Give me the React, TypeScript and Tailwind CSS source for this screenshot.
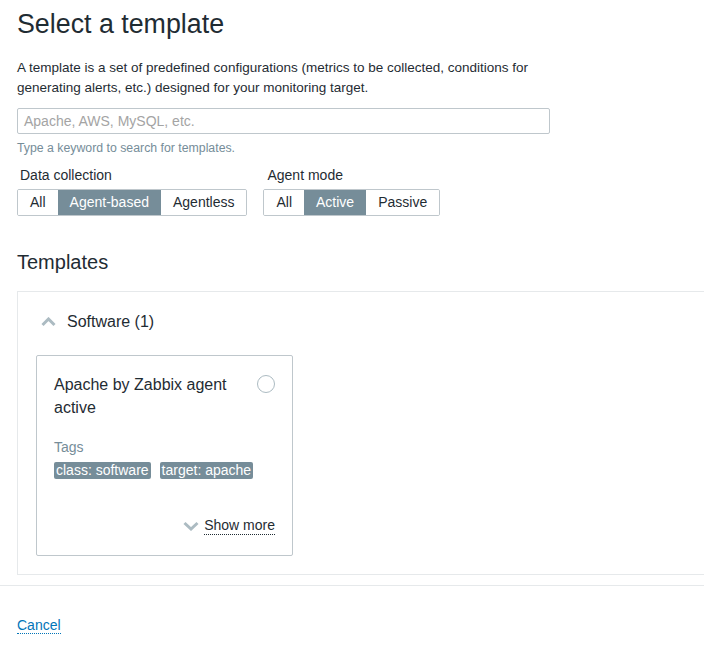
import React from "react";

function Segmented({ items, active }: { items: string[]; active: number }) {
  return (
    <div className="flex h-[27px] border border-[#bfc7cc] rounded-[2px] overflow-hidden">
      {items.map((it, i) => (
        <div
          key={it}
          className={
            i === active
              ? "px-3 flex items-center bg-[#768d99] text-white text-[14px]"
              : "px-3 flex items-center bg-white text-[#1f2c33] text-[14px]"
          }
        >
          {it}
        </div>
      ))}
    </div>
  );
}

export default function App() {
  return (
    <div className="font-['Liberation_Sans',Arial,sans-serif] text-[#1f2c33] bg-white w-[704px] h-[661px] overflow-hidden">
      <div className="px-[17px]">
        <h1 className="text-[26.8px] leading-[30px] pt-[9px] font-normal">Select a template</h1>
        <p className="mt-[19px] text-[13.5px] leading-[20px] w-[533px]">
          A template is a set of predefined configurations (metrics to be collected, conditions for generating alerts, etc.) designed for your monitoring target.
        </p>
        <div className="mt-[10px] w-[533px] h-[26px] border border-[#bfc7cc] rounded-[2px] flex items-center px-[6px] text-[14px] text-[#a4a4a4]">
          Apache, AWS, MySQL, etc.
        </div>
        <div className="mt-[6px] text-[12.3px] leading-[16px] text-[#768d99]">Type a keyword to search for templates.</div>
        <div className="mt-[11px] flex gap-[16px]">
          <div className="flex flex-col">
            <div className="text-[14px] leading-[16px] pl-[3px]">Data collection</div>
            <div className="mt-[6px]">
              <Segmented items={["All", "Agent-based", "Agentless"]} active={1} />
            </div>
          </div>
          <div className="flex flex-col">
            <div className="text-[14px] leading-[16px] pl-[4px]">Agent mode</div>
            <div className="mt-[6px]">
              <Segmented items={["All", "Active", "Passive"]} active={1} />
            </div>
          </div>
        </div>
        <h2 className="mt-[34px] text-[20px] leading-[24px] font-normal">Templates</h2>
      </div>
      <div className="ml-[17px] mt-[17px] w-[720px] border-t border-l border-b border-[#e6e9eb] pl-[18px] pt-[20px] pb-[18px]">
        <div className="flex items-center h-[20px] pl-[5px]">
          <svg width="15" height="10" viewBox="0 0 15 10" className="mr-[11px]">
            <polyline points="1.5,8 7.5,2 13.5,8" fill="none" stroke="#acbbc2" strokeWidth="3" />
          </svg>
          <span className="text-[16px] leading-[20px]">Software (1)</span>
        </div>
        <div className="mt-[23px] w-[257px] h-[201px] border border-[#bfc7cc] rounded-[2px] pl-[17px] pr-[17px] pt-[17px] pb-[20px] flex flex-col">
          <div className="flex justify-between items-start">
            <div className="text-[16px] leading-[23px] w-[180px]">Apache by Zabbix agent active</div>
            <div className="mt-[2px] w-[18px] h-[18px] rounded-full border border-[#acbbc2]"></div>
          </div>
          <div className="mt-[19px] text-[14px] leading-[18px] text-[#768d99]">Tags</div>
          <div className="mt-[6px] flex gap-[9px]">
            <span className="bg-[#768d99] text-white text-[14px] leading-[17px] px-[2px] rounded-[2px]">class: software</span>
            <span className="bg-[#768d99] text-white text-[14px] leading-[17px] px-[2px] rounded-[2px]">target: apache</span>
          </div>
          <div className="mt-auto flex justify-end items-center">
            <svg width="16" height="10" viewBox="0 0 16 10" className="mr-[5px]">
              <polyline points="1.5,2 8,8 14.5,2" fill="none" stroke="#acbbc2" strokeWidth="3" />
            </svg>
            <span className="text-[14px] leading-[18px] border-b border-dotted border-[#1f2c33]">Show more</span>
          </div>
        </div>
      </div>
      <div className="mt-[10px] border-t border-[#e6e9eb]"></div>
      <div className="px-[17px] mt-[27px]">
        <span className="text-[14px] leading-[18px] text-[#0275b8] border-b border-dotted border-[#0275b8]">Cancel</span>
      </div>
    </div>
  );
}
